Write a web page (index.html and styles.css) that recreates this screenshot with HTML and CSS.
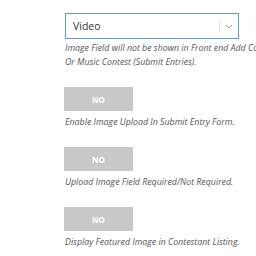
FILE: index.html
```html
<!DOCTYPE html>
<html lang="en">

<head>
  <meta charset="UTF-8">
  <meta name="viewport" content="width=device-width, initial-scale=1.0">
  <title>Contest Settings</title>
  <link rel="stylesheet" href="styles.css">
</head>

<body>

  <div class="settings">
    <div class="field first">
      <div class="select-box">
        <span class="select-value">Video</span>
        <span class="select-arrow">
          <svg width="8" height="5" viewBox="0 0 8 5">
            <path d="M1 1 L4 4 L7 1" fill="none" stroke="#999" stroke-width="1"/>
          </svg>
        </span>
      </div>
      <p class="desc tight">Image Field will not be shown in Front end Add Contest<br>Or Music Contest (Submit Entries).</p>
    </div>

    <div class="field">
      <button class="toggle">NO</button>
      <p class="desc">Enable Image Upload In Submit Entry Form.</p>
    </div>

    <div class="field">
      <button class="toggle">NO</button>
      <p class="desc">Upload Image Field Required/Not Required.</p>
    </div>

    <div class="field">
      <button class="toggle">NO</button>
      <p class="desc">Display Featured Image in Contestant Listing.</p>
    </div>
  </div>

</body>

</html>
```

FILE: styles.css
```css
body {
  font-family: 'Open Sans', sans-serif;
  background-color: #fff;
  color: #444;
  margin: 0;
  padding: 0;
  overflow: hidden;
}

.settings {
  padding: 13px 0 0 64px;
  white-space: nowrap;
  overflow: hidden;
}

.field {
  margin-bottom: 18px;
}

.select-box {
  width: 172px;
  height: 24px;
  margin-left: 1px;
  border: 1px solid #5b9dd9;
  display: flex;
  align-items: center;
  justify-content: space-between;
  background-color: #fff;
}

.select-value {
  font-size: 10.5px;
  color: #333;
  padding-left: 7px;
}

.select-arrow {
  display: flex;
  align-items: center;
  justify-content: center;
  width: 17px;
  height: 10px;
  border-left: 1px solid #ddd;
  margin-right: 1px;
}

.toggle {
  display: block;
  width: 69px;
  height: 24px;
  border: none;
  border-radius: 0;
  background-color: #c8c8c8;
  color: #fff;
  font-family: 'Open Sans', sans-serif;
  font-size: 8px;
  font-weight: bold;
  padding: 0;
}

.desc {
  margin: 4px 0 0 1px;
  font-size: 8.8px;
  font-style: italic;
  line-height: 14px;
  color: #555;
}

.desc.tight {
  margin-top: 2px;
}
```
